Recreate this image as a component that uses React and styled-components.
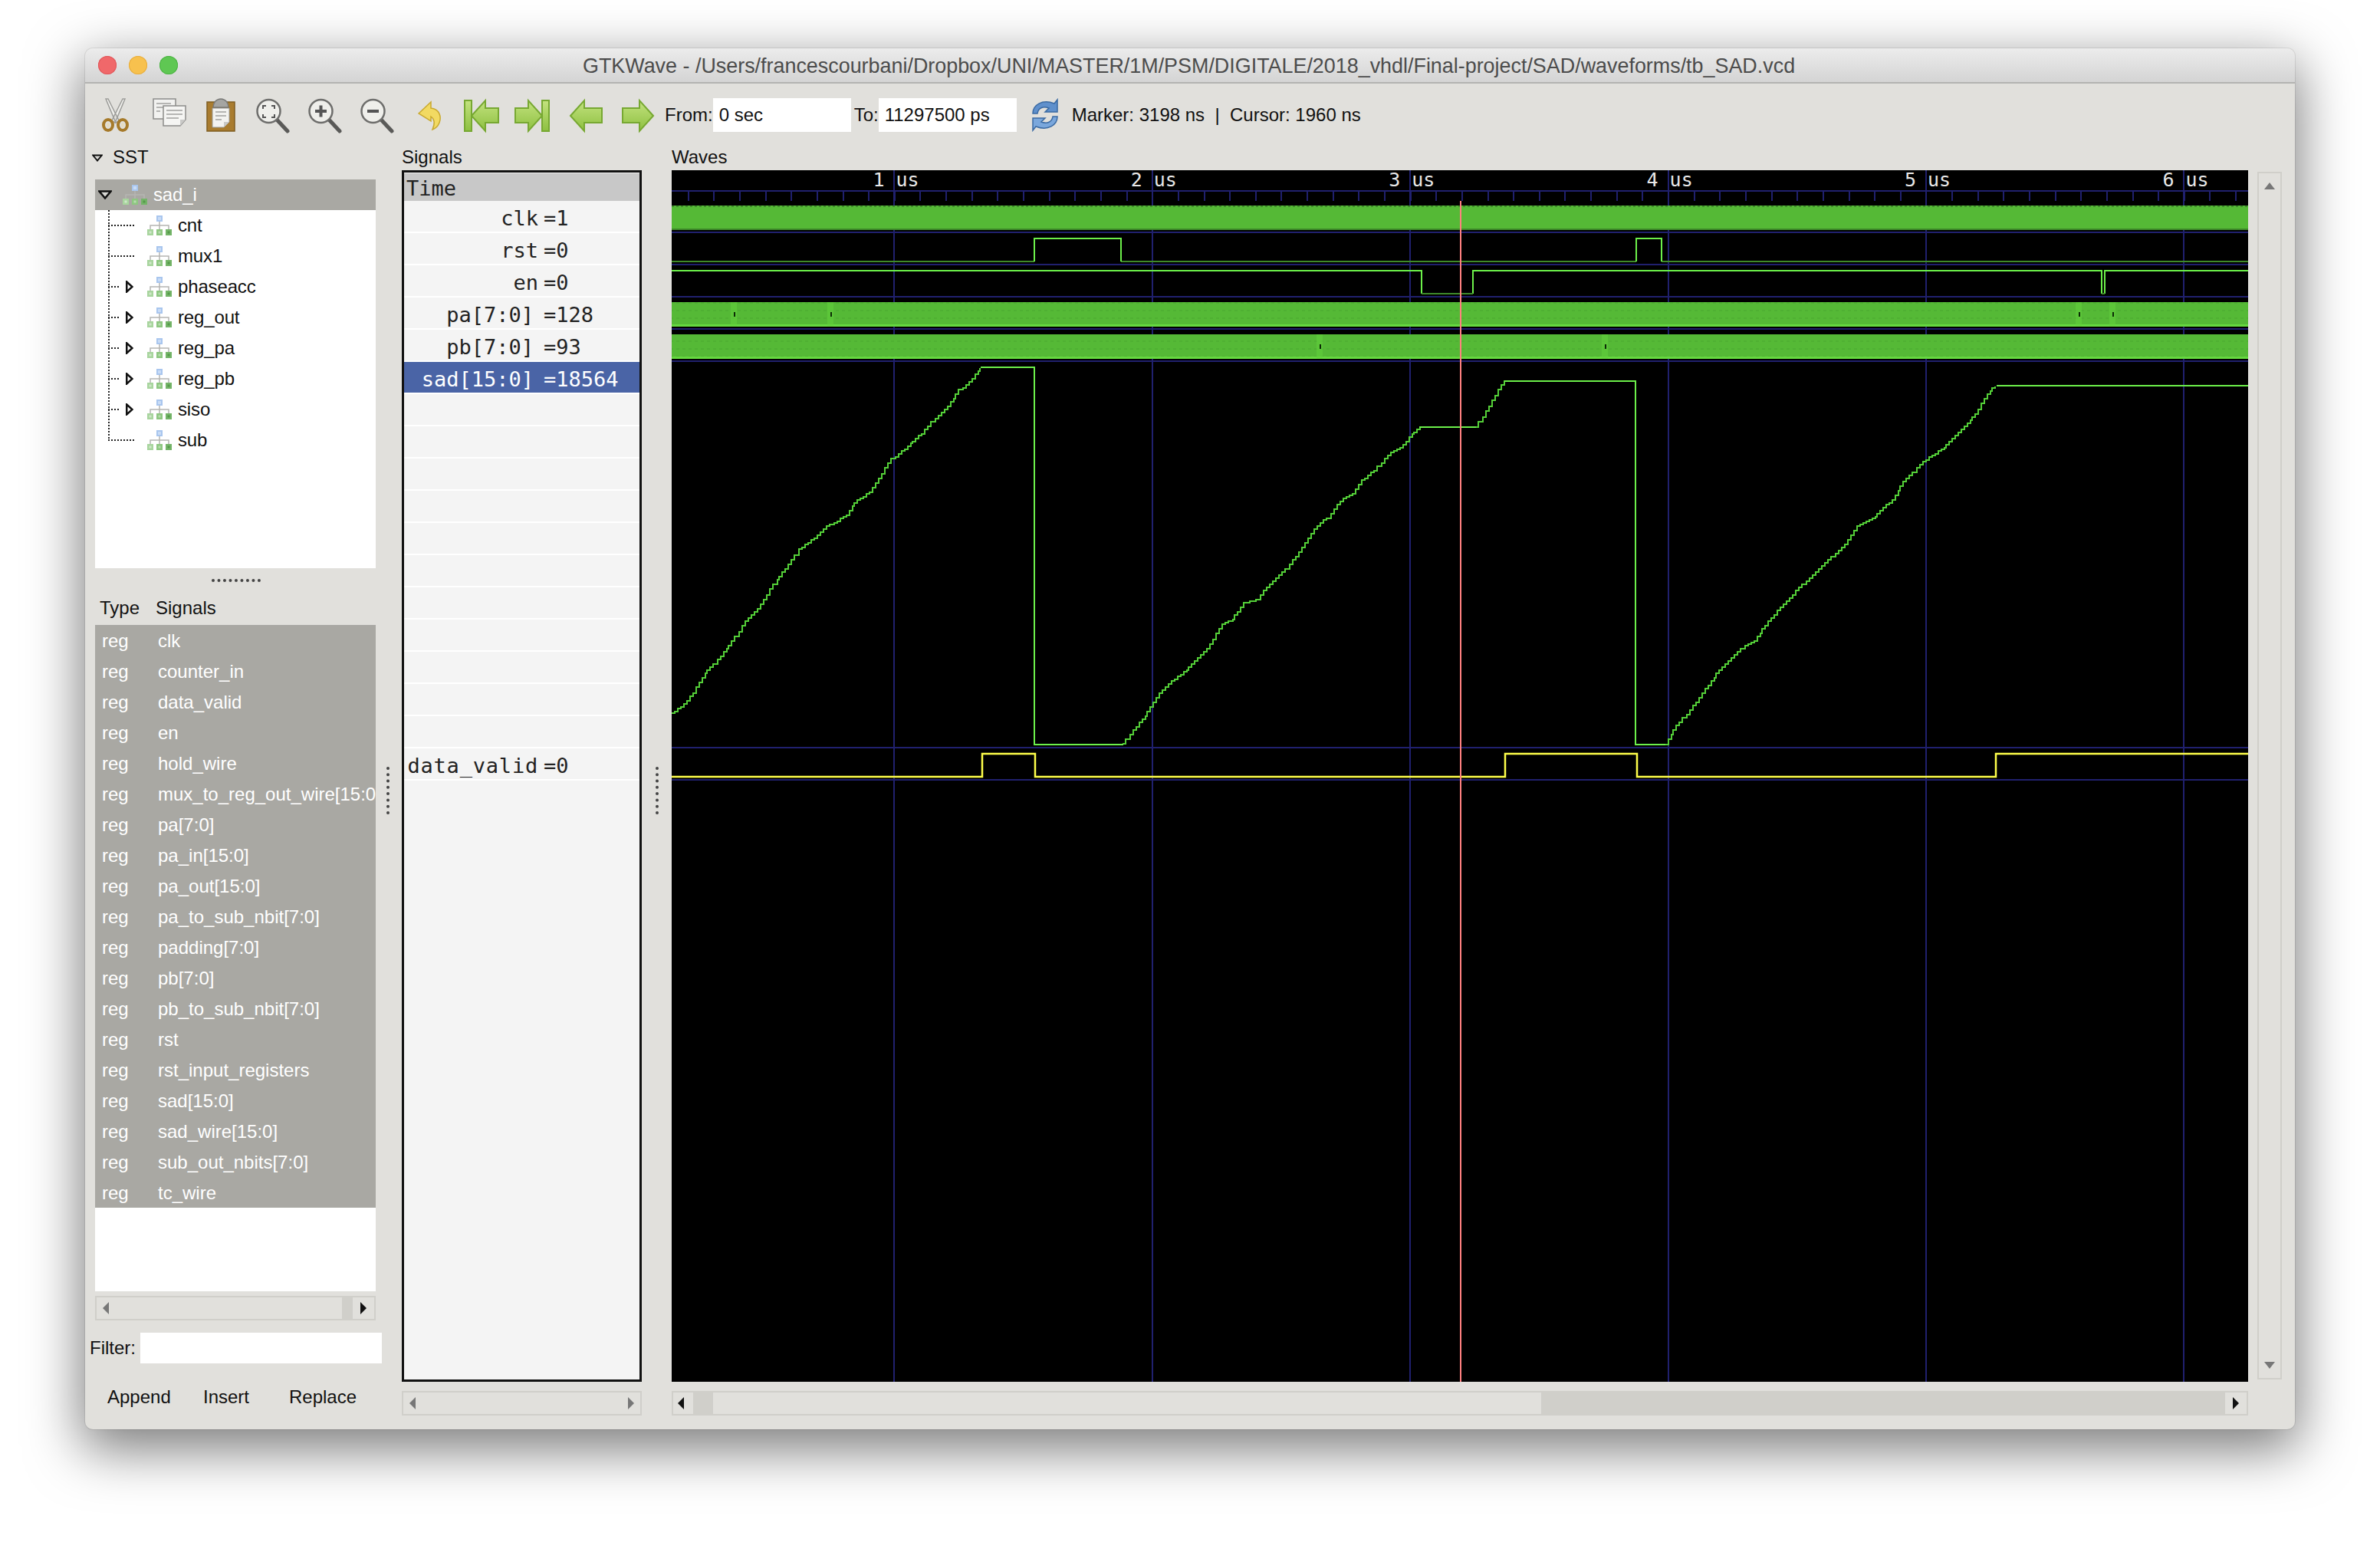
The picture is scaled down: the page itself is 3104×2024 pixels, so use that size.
import React from 'react';
import styled, { createGlobalStyle } from 'styled-components';

const GlobalStyle = createGlobalStyle`
	html, body {
		margin: 0;
		background: #fff;
		overflow: hidden;
	}
	body {
		font-family: "Liberation Sans", Arial, sans-serif;
		font-size: 24px;
		color: #111;
	}
`;

const Page = styled.div`
	width: 3104px;
	height: 2024px;
	padding: 63px 0 0 111px;
	box-sizing: border-box;
`;

const Window = styled.div`
	width: 2882px;
	height: 1801px;
	display: flex;
	flex-direction: column;
	background: #e1e0dc;
	border-radius: 10px;
	box-shadow: 0 22px 70px 4px rgba(0, 0, 0, 0.52), 0 0 0 1px rgba(0, 0, 0, 0.08);
	overflow: hidden;
`;

const TitleBar = styled.div`
	height: 44px;
	flex: none;
	display: flex;
	align-items: center;
	padding-left: 17px;
	background: linear-gradient(#ececec, #d4d4d4);
	border-bottom: 2px solid #b3b3b1;
`;

const Lights = styled.div`
	display: flex;
	gap: 16px;
	flex: none;
`;

const Light = styled.span`
	width: 24px;
	height: 24px;
	border-radius: 50%;
	background: ${(p) => p.$color};
	box-shadow: inset 0 0 0 1px ${(p) => p.$edge};
`;

const Title = styled.div`
	margin-left: 528px;
	padding-top: 2px;
	font-size: 26.9px;
	color: #4c4c4c;
	white-space: nowrap;
`;

const Toolbar = styled.div`
	height: 81px;
	flex: none;
	display: flex;
	align-items: center;
	padding-left: 6px;
`;

const ToolButton = styled.div`
	width: 68px;
	height: 48px;
	flex: none;
	display: flex;
	justify-content: center;
`;

const FieldLabel = styled.span`
	margin-left: ${(p) => p.$left || 0}px;
	white-space: nowrap;
`;

const Field = styled.div`
	width: ${(p) => p.$width}px;
	height: 44px;
	flex: none;
	box-sizing: border-box;
	padding-left: 8px;
	line-height: 44px;
	background: #fff;
`;

const RefreshSlot = styled.div`
	width: 48px;
	height: 48px;
	margin-left: 13px;
	flex: none;
`;

const Status = styled.span`
	margin-left: 11px;
	white-space: pre;
`;

const Panes = styled.div`
	flex: 1;
	display: flex;
	padding-left: 6px;
	min-height: 0;
`;

const LeftPane = styled.div`
	width: 381px;
	flex: none;
	display: flex;
	flex-direction: column;
`;

const PaneLabel = styled.div`
	height: 32px;
	flex: none;
	line-height: 30px;
	white-space: nowrap;
`;

const SstLabel = styled(PaneLabel)`
	height: 44px;
	display: flex;
	padding-left: 3px;
	gap: 13px;
`;

const Tree = styled.div`
	height: 507px;
	flex: none;
	margin: 0 8px 0 7px;
	background: #fff;
`;

const TreeRow = styled.div`
	height: 40px;
	display: flex;
	align-items: center;
	box-sizing: border-box;
	padding-left: ${(p) => (p.$selected ? 4 : 17)}px;
	background: ${(p) => (p.$selected ? '#a9a8a3' : 'transparent')};
	color: ${(p) => (p.$selected ? '#fff' : '#111')};
`;

const Stem = styled.div`
	width: 51px;
	height: 40px;
	flex: none;
	display: flex;
	align-items: center;
	justify-content: flex-end;
	padding-right: 18px;
	box-sizing: border-box;
	background-image: repeating-linear-gradient(to bottom, #222 0 2px, transparent 2px 4px),
		repeating-linear-gradient(to right, #222 0 2px, transparent 2px 4px);
	background-size: 2px ${(p) => (p.$last ? '50%' : '100%')}, ${(p) => (p.$branch ? 14 : 34)}px 2px;
	background-position: 0 0, 0 50%;
	background-repeat: no-repeat;
`;

const OpenSlot = styled.span`
	width: 18px;
	margin-right: 14px;
	display: flex;
	flex: none;
`;

const SstToggle = styled.span`
	width: 14px;
	margin-top: 11px;
	display: flex;
	flex: none;
`;

const NodeName = styled.span`
	margin-left: 8px;
	white-space: nowrap;
	letter-spacing: -0.15px;
`;

const HandleRow = styled.div`
	height: 34px;
	flex: none;
	display: flex;
	justify-content: center;
	padding-top: 14px;
	box-sizing: border-box;
`;

const Handle = styled.div`
	width: 64px;
	height: 4px;
	border-top: 4px dotted #444;
`;

const ListHeader = styled.div`
	height: 40px;
	flex: none;
	display: flex;
	align-items: center;
	box-sizing: border-box;
	padding: 0 0 5px 13px;
`;

const TypeCol = styled.span`
	width: 73px;
	flex: none;
`;

const SignalList = styled.div`
	height: 869px;
	flex: none;
	margin: 0 8px 0 7px;
	background: #fff;
	overflow: hidden;
`;

const SignalItem = styled.div`
	height: 40px;
	display: flex;
	align-items: center;
	box-sizing: border-box;
	padding: 2px 0 0 9px;
	background: #a9a8a3;
	color: #fff;
	white-space: nowrap;
	overflow: hidden;
`;

const Trough = styled.div`
	height: 32px;
	flex: none;
	display: flex;
	box-sizing: border-box;
	border: 2px solid #d0cfca;
	background: #d0cfca;
	margin: ${(p) => p.$margin || 0};
`;

const ScrollPart = styled.div`
	width: ${(p) => (p.$width ? p.$width + 'px' : 'auto')};
	flex: ${(p) => (p.$width ? 'none' : 1)};
	display: flex;
	align-items: center;
	justify-content: ${(p) => p.$justify || 'center'};
	padding: 0 ${(p) => p.$pad || 0}px;
	box-sizing: border-box;
	background: ${(p) => (p.$dark ? '#d0cfca' : '#e1e0dc')};
`;

const ArrowLeft = styled.span`
	width: 0;
	height: 0;
	border-style: solid;
	border-width: 8px 8px 8px 0;
	border-color: transparent ${(p) => p.$color} transparent transparent;
`;

const ArrowRight = styled.span`
	width: 0;
	height: 0;
	border-style: solid;
	border-width: 8px 0 8px 8px;
	border-color: transparent transparent transparent ${(p) => p.$color};
`;

const FilterRow = styled.div`
	height: 40px;
	flex: none;
	display: flex;
	align-items: center;
	margin-top: 16px;
`;

const FilterInput = styled.div`
	width: 316px;
	height: 40px;
	margin-left: 6px;
	background: #fff;
`;

const ActionRow = styled.div`
	height: 60px;
	flex: none;
	display: flex;
	align-items: flex-start;
	padding: 30px 0 0 23px;
`;

const ActionButton = styled.span`
	width: ${(p) => p.$width}px;
	flex: none;
`;

const Splitter = styled.div`
	width: ${(p) => p.$width}px;
	flex: none;
	display: flex;
	justify-content: center;
	padding: 810px ${(p) => p.$shift || 0}px 0 0;
	box-sizing: border-box;
`;

const SplitDots = styled.div`
	width: 0;
	height: 62px;
	border-left: 4px dotted #444;
`;

const SignalPane = styled.div`
	width: 313px;
	flex: none;
	display: flex;
	flex-direction: column;
`;

const SignalBox = styled.div`
	height: 1580px;
	flex: none;
	box-sizing: border-box;
	border: 3px solid #111;
	padding-top: 1px;
	background: #f4f4f4;
	font-family: "DejaVu Sans Mono", "Liberation Mono", monospace;
	font-size: 27px;
	overflow: hidden;
`;

const TimeRow = styled.div`
	height: 36px;
	box-sizing: border-box;
	padding: 2px 0 0 3px;
	line-height: 36px;
	background: #c8c8c8;
	color: #222;
`;

const ValueRow = styled.div`
	height: 42px;
	box-sizing: border-box;
	display: flex;
	border-bottom: 2px solid #fff;
	padding-top: 5px;
	line-height: 36px;
	white-space: nowrap;
	background: ${(p) => (p.$selected ? '#4a64a6' : '#f4f4f4')};
	color: ${(p) => (p.$selected ? '#fff' : '#222')};
`;

const ValueName = styled.span`
	width: 175px;
	flex: none;
	text-align: right;
	padding-right: ${(p) => (p.$bus ? 6 : 0)}px;
	box-sizing: border-box;
	letter-spacing: ${(p) => (p.$wide ? 0.8 : 0)}px;
`;

const ValueText = styled.span`
	margin-left: 7px;
`;

const WavesPane = styled.div`
	width: 2056px;
	flex: none;
	display: flex;
	flex-direction: column;
`;

const WaveCanvas = styled.svg`
	display: block;
	width: 2056px;
	height: 1580px;
	flex: none;
	background: #000;
`;

const VScroll = styled.div`
	width: 32px;
	height: 1575px;
	flex: none;
	margin: 34px 0 0 12px;
	box-sizing: border-box;
	border: 2px solid #d0cfca;
	background: #e1e0dc;
	display: flex;
	flex-direction: column;
	justify-content: space-between;
	align-items: center;
	padding: 12px 0;
`;

const ArrowUp = styled.span`
	width: 0;
	height: 0;
	border-style: solid;
	border-width: 0 7px 9px 7px;
	border-color: transparent transparent #777 transparent;
`;

const ArrowDown = styled.span`
	width: 0;
	height: 0;
	border-style: solid;
	border-width: 9px 7px 0 7px;
	border-color: #777 transparent transparent transparent;
`;

const GRID = '#20206e';
const BAND = '#55b936';
const HIGH = '#6cf04a';
const LOW = '#3f8a2a';

const NODES = [
	{ name: 'cnt' },
	{ name: 'mux1' },
	{ name: 'phaseacc', branch: true },
	{ name: 'reg_out', branch: true },
	{ name: 'reg_pa', branch: true },
	{ name: 'reg_pb', branch: true },
	{ name: 'siso', branch: true },
	{ name: 'sub', last: true },
];

const SIGNALS = [
	'clk', 'counter_in', 'data_valid', 'en', 'hold_wire', 'mux_to_reg_out_wire[15:0]',
	'pa[7:0]', 'pa_in[15:0]', 'pa_out[15:0]', 'pa_to_sub_nbit[7:0]', 'padding[7:0]', 'pb[7:0]',
	'pb_to_sub_nbit[7:0]', 'rst', 'rst_input_registers', 'sad[15:0]', 'sad_wire[15:0]',
	'sub_out_nbits[7:0]', 'tc_wire',
];

const VALUES = [
	{ name: 'clk', value: '=1' },
	{ name: 'rst', value: '=0' },
	{ name: 'en', value: '=0' },
	{ name: 'pa[7:0]', value: '=128', bus: true },
	{ name: 'pb[7:0]', value: '=93', bus: true },
	{ name: 'sad[15:0]', value: '=18564', bus: true, selected: true },
	...Array.from({ length: 11 }, () => ({ name: '', value: '' })),
	{ name: 'data_valid', value: '=0', wide: true },
];

// key points of the sad[15:0] ramps, read off the trace
const RAMP_A = [[0,1380],[15,1345],[25,1300],[35,1240],[45,1200],[60,1140],[70,1100],[85,1020],[100,970],[110,915],[122,860],[135,800],[147,740],[165,695],[180,650],[203,605],[212,555],[230,515],[240,460],[255,385],[270,345],[290,285],[305,225],[320,180],[333,115],[345,85],[358,27]];
const RAMP_B = [[523,1500],[535,1445],[552,1375],[565,1300],[580,1255],[600,1200],[620,1130],[638,1030],[650,1015],[663,950],[680,935],[690,885],[712,815],[728,750],[748,645],[760,615],[775,550],[790,520],[800,470],[815,430],[830,370],[845,340],[858,290],[868,261]];
const RAMP_C = [[932,261],[940,220],[955,135],[965,80]];
const RAMP_D = [[1152,1502],[1165,1430],[1180,1370],[1195,1300],[1215,1210],[1240,1125],[1255,1095],[1265,1050],[1285,965],[1300,915],[1330,815],[1345,770],[1360,720],[1375,650],[1395,610],[1415,545],[1425,490],[1450,395],[1475,340],[1495,270],[1512,210],[1525,130],[1535,99]];

const toX = (v) => 876 + v / 0.889;
const toY = (v) => 470 + v / 3;

function stairs(points) {
	let d = `M${toX(points[0][0]).toFixed(0)} ${toY(points[0][1]).toFixed(0)}`;
	for (let i = 1; i < points.length; i++) {
		const x0 = toX(points[i - 1][0]);
		const y0 = toY(points[i - 1][1]);
		const x1 = toX(points[i][0]);
		const y1 = toY(points[i][1]);
		const steps = Math.max(1, Math.round((x1 - x0) / 4));
		for (let s = 1; s <= steps; s++) {
			const x = Math.round((x0 + ((x1 - x0) * s) / steps) / 2) * 2;
			const y = Math.round((y0 + ((y1 - y0) * s) / steps) / 2) * 2;
			d += `H${x}V${y}`;
		}
	}
	return d;
}

function TriangleDown({ width, height }) {
	return (
		<svg width={width} height={height} viewBox="0 0 18 12">
			<path d="M1.500 1.500H16.500L9 10.500Z" fill="#d8d8d4" stroke="#111" strokeWidth="2.500" />
		</svg>
	);
}

function TriangleRight() {
	return (
		<svg width="10" height="16" viewBox="0 0 10 16">
			<path d="M1.250 1.500L8.500 8L1.250 14.500Z" fill="#fff" stroke="#111" strokeWidth="2.500" />
		</svg>
	);
}

function NodeIcon() {
	return (
		<svg width="32" height="26" viewBox="0 0 32 26" style={{ flex: 'none' }}>
			<rect x="12" y="0" width="8" height="8" fill="#a9c6ee" />
			<rect x="14" y="2" width="4" height="4" fill="#c9dcf6" />
			<path d="M16 8V13M4 18V13H28V18M16 13V18" stroke="#b5b5b2" strokeWidth="1.5" fill="none" />
			<rect x="0" y="18" width="8" height="8" fill="#a8d59e" />
			<rect x="12" y="18" width="8" height="8" fill="#8ec781" />
			<rect x="24" y="18" width="8" height="8" fill="#74b468" />
			<rect x="2.5" y="20.5" width="3" height="3" fill="#cfe8c9" />
			<rect x="14.5" y="20.5" width="3" height="3" fill="#b6dcae" />
			<rect x="26.5" y="20.5" width="3" height="3" fill="#559a4a" />
		</svg>
	);
}

function IconBox({ children }) {
	return (
		<ToolButton>
			<svg width="48" height="48" viewBox="0 0 48 48">
				{children}
			</svg>
		</ToolButton>
	);
}

function CutIcon() {
	return (
		<IconBox>
			<path d="M11 3L14 3L28 31L24 34ZM36 3L33 3L19 31L23 34Z" fill="#efefec" stroke="#9d9d9a" strokeWidth="1.5" />
			<ellipse cx="14" cy="37" rx="6" ry="7" fill="none" stroke="#a67a2a" strokeWidth="4" />
			<ellipse cx="33" cy="37" rx="6" ry="7" fill="none" stroke="#a67a2a" strokeWidth="4" />
			<ellipse cx="14" cy="37" rx="2" ry="3" fill="#e6dcc0" />
			<ellipse cx="33" cy="37" rx="2" ry="3" fill="#e6dcc0" />
		</IconBox>
	);
}

function CopyIcon() {
	return (
		<IconBox>
			<rect x="5" y="3" width="29" height="26" fill="#f2f2f0" stroke="#8c8c8a" strokeWidth="1.5" />
			<path d="M9 9H28M9 14H26M9 19H14" stroke="#b5b5b3" strokeWidth="2" />
			<path d="M18 12H47V30L40 38H18Z" fill="#f5f5f3" stroke="#8c8c8a" strokeWidth="1.5" />
			<path d="M22 18H43M22 23H43M22 28H38" stroke="#b5b5b3" strokeWidth="2" />
			<path d="M47 30H40V38Z" fill="#c9c9c7" />
		</IconBox>
	);
}

function PasteIcon() {
	return (
		<IconBox>
			<rect x="7" y="7" width="36" height="38" fill="#a97c2f" stroke="#7f5d22" strokeWidth="1.5" />
			<path d="M14 15H36V33L29 40H14Z" fill="#f3f3f1" stroke="#9a9a98" strokeWidth="1" />
			<path d="M18 20H32M18 25H32M18 30H26" stroke="#b5b5b3" strokeWidth="2" />
			<path d="M36 33H29V40Z" fill="#c9c9c7" />
			<path d="M15 14C15 8 19 3 25 3C31 3 35 8 35 14Z" fill="#a5a5a2" stroke="#7a7a78" strokeWidth="1.5" />
		</IconBox>
	);
}

function Lens({ children }) {
	return (
		<IconBox>
			<path d="M30 30L44 45" stroke="#5a5a58" strokeWidth="5" strokeLinecap="round" />
			<circle cx="19.5" cy="19" r="15" fill="#efefeb" stroke="#6e6e6c" strokeWidth="2.5" />
			{children}
		</IconBox>
	);
}

function UndoIcon() {
	return (
		<IconBox>
			<path d="M11 22L27 7V15C38 16 41 26 38 34C36 39 32 42 29 43C32 36 33 30 27 26V32Z" fill="#f2da62" stroke="#c9a92f" strokeWidth="1.5" />
		</IconBox>
	);
}

function GreenArrow({ id, flip, bar, head, tail }) {
	return (
		<IconBox>
			<defs>
				<linearGradient id={id} x1="0" y1="0" x2="0" y2="1">
					<stop offset="0" stopColor="#c3e27f" />
					<stop offset="1" stopColor="#8dc040" />
				</linearGradient>
			</defs>
			<g transform={flip ? 'translate(48 0) scale(-1 1)' : undefined} stroke="#77a832" strokeWidth="2" fill={`url(#${id})`}>
				{bar && <rect x="3" y="5" width="9" height="40" />}
				<path d={`M${head} 25L${head + 18} 5V15H${tail}V34H${head + 18}V45Z`} />
			</g>
		</IconBox>
	);
}

function RefreshIcon() {
	return (
		<svg width="48" height="48" viewBox="0 0 48 48">
			<path d="M8 22C8 11 20 3 36 9L40 4V20H24L29 15C21 12 15 15 14 22Z" fill="#5f90cc" stroke="#3a6aa3" strokeWidth="1.5" />
			<path d="M40 26C40 37 28 45 12 39L8 44V28H24L19 33C27 36 33 33 34 26Z" fill="#7aa7dc" stroke="#3a6aa3" strokeWidth="1.5" />
		</svg>
	);
}

function Scale() {
	const majors = [1, 2, 3, 4, 5, 6];
	const ticks = [];
	for (let x = 896.7; x < 2932; x += 33.64) ticks.push(Math.round(x));
	return (
		<g>
			{majors.map((n) => {
				const x = 1165.4 + (n - 1) * 336.4;
				return (
					<g key={n}>
						<rect x={Math.round(x)} y="222" width="2" height="1580" fill={GRID} />
						<text x={x - 27} y="243" fill="#e8e8e8" fontFamily="DejaVu Sans Mono, monospace" fontSize="25">{n}</text>
						<text x={x + 3} y="243" fill="#e8e8e8" fontFamily="DejaVu Sans Mono, monospace" fontSize="25">us</text>
					</g>
				);
			})}
			{ticks.map((x) => (
				<rect key={x} x={x} y="250" width="2" height="12" fill={GRID} />
			))}
			<rect x="876" y="248" width="2056" height="2" fill={GRID} />
			{[302, 344, 386, 428, 470, 974, 1016].map((y) => (
				<rect key={y} x="876" y={y} width="2056" height="2" fill={GRID} />
			))}
		</g>
	);
}

function Band({ y, marks }) {
	return (
		<g>
			<rect x="876" y={y} width="2056" height="32" fill="url(#busDots)" />
			<rect x="876" y={y + 29} width="2056" height="3" fill="#66d93f" />
			{marks.map((x) => (
				<g key={x}>
					<rect x={x - 4} y={y} width="8" height="32" fill="#62d23c" opacity="0.55" />
					<rect x={x} y={y + 13} width="2" height="6" fill="#0b2a05" />
				</g>
			))}
		</g>
	);
}

function Waves() {
	return (
		<WaveCanvas viewBox="876 222 2056 1580">
			<defs>
				<pattern id="busDots" width="8" height="10" patternUnits="userSpaceOnUse">
					<rect width="8" height="10" fill={BAND} />
					<rect x="2" y="4" width="4" height="2" fill="#4fb033" />
				</pattern>
				<pattern id="clkEdge" width="6" height="2" patternUnits="userSpaceOnUse">
					<rect width="3" height="2" fill="#3f8a2a" />
					<rect x="3" width="3" height="2" fill={BAND} />
				</pattern>
			</defs>
			<Scale />

			{/* clk */}
			<rect x="876" y="268" width="2056" height="32" fill={BAND} />
			<rect x="876" y="268" width="2056" height="2" fill="url(#clkEdge)" />
			<rect x="876" y="298" width="2056" height="2" fill={LOW} />

			{/* rst */}
			<path d="M876 341H1349M1462 341H2134M2167 341H2932" stroke={LOW} strokeWidth="2" fill="none" />
			<path d="M1349 341V311H1462V341M2134 341V311H2167V341" stroke={HIGH} strokeWidth="2" fill="none" />

			{/* en */}
			<path d="M876 353H1854V383M1921 383V353H2741V383M2745 383V353H2932" stroke={HIGH} strokeWidth="2" fill="none" />
			<path d="M1854 383H1921M2741 383H2745" stroke={LOW} strokeWidth="2" fill="none" />

			<Band y={394} marks={[957, 1083, 2711, 2755]} />
			<Band y={436} marks={[1721, 2093]} />

			{/* sad[15:0] */}
			<path d={stairs(RAMP_A)} stroke="#54cf38" strokeWidth="2" fill="none" />
			<path d={stairs(RAMP_B)} stroke="#54cf38" strokeWidth="2" fill="none" />
			<path d={stairs(RAMP_C)} stroke="#54cf38" strokeWidth="2" fill="none" />
			<path d={stairs(RAMP_D)} stroke="#54cf38" strokeWidth="2" fill="none" />
			<path d="M1279 479H1349V971H1465M1925 557H1851M1962 497H2133V971H2172M2604 503H2932" stroke={HIGH} strokeWidth="2" fill="none" />

			{/* data_valid */}
			<path d="M876 1013H1281V983H1350V1013H1963V983H2135V1013H2603V983H2932" stroke="#ffff4a" strokeWidth="2.5" fill="none" />

			{/* marker */}
			<rect x="1904" y="262" width="2" height="1540" fill="#ff8080" />
		</WaveCanvas>
	);
}

export default function App() {
	return (
		<Page>
			<GlobalStyle />
			<Window>
				<TitleBar>
					<Lights>
						<Light $color="#f0686a" $edge="#e0565a" />
						<Light $color="#f7c14e" $edge="#e8ad3c" />
						<Light $color="#5fc753" $edge="#4cb344" />
					</Lights>
					<Title>GTKWave - /Users/francescourbani/Dropbox/UNI/MASTER/1M/PSM/DIGITALE/2018_vhdl/Final-project/SAD/waveforms/tb_SAD.vcd</Title>
				</TitleBar>
				<Toolbar>
					<CutIcon />
					<CopyIcon />
					<PasteIcon />
					<Lens>
						<path d="M12 16V12H16M23 12H27V16M27 23V27H23M16 27H12V23" stroke="#555" strokeWidth="2" fill="none" />
					</Lens>
					<Lens>
						<path d="M12 19H27M19.5 11.500V26.500" stroke="#555" strokeWidth="4" />
					</Lens>
					<Lens>
						<path d="M12 19H27" stroke="#555" strokeWidth="4" />
					</Lens>
					<UndoIcon />
					<GreenArrow id="gFirst" bar head={12} tail={47} />
					<GreenArrow id="gLast" bar flip head={12} tail={47} />
					<GreenArrow id="gLeft" head={5} tail={46} />
					<GreenArrow id="gRight" flip head={3} tail={43} />
					<FieldLabel $left={2}>From:</FieldLabel>
					<Field $width={180}>0 sec</Field>
					<FieldLabel $left={4}>To:</FieldLabel>
					<Field $width={180}>11297500 ps</Field>
					<RefreshSlot>
						<RefreshIcon />
					</RefreshSlot>
					<Status>Marker: 3198 ns  |  Cursor: 1960 ns</Status>
				</Toolbar>
				<Panes>
					<LeftPane>
						<SstLabel>
							<SstToggle>
								<TriangleDown width={14} height={10} />
							</SstToggle>
							SST
						</SstLabel>
						<Tree>
							<TreeRow $selected>
								<OpenSlot>
									<TriangleDown width={18} height={12} />
								</OpenSlot>
								<NodeIcon />
								<NodeName>sad_i</NodeName>
							</TreeRow>
							{NODES.map((node) => (
								<TreeRow key={node.name}>
									<Stem $branch={node.branch} $last={node.last}>
										{node.branch && <TriangleRight />}
									</Stem>
									<NodeIcon />
									<NodeName>{node.name}</NodeName>
								</TreeRow>
							))}
						</Tree>
						<HandleRow>
							<Handle />
						</HandleRow>
						<ListHeader>
							<TypeCol>Type</TypeCol>
							<span>Signals</span>
						</ListHeader>
						<SignalList>
							{SIGNALS.map((name) => (
								<SignalItem key={name}>
									<TypeCol>reg</TypeCol>
									{name}
								</SignalItem>
							))}
						</SignalList>
						<Trough $margin="6px 8px 0 7px">
							<ScrollPart $width={320} $justify="flex-start" $pad={8}>
								<ArrowLeft $color="#777" />
							</ScrollPart>
							<ScrollPart $dark />
							<ScrollPart $width={28}>
								<ArrowRight $color="#111" />
							</ScrollPart>
						</Trough>
						<FilterRow>
							<span>Filter:</span>
							<FilterInput />
						</FilterRow>
						<ActionRow>
							<ActionButton $width={125}>Append</ActionButton>
							<ActionButton $width={112}>Insert</ActionButton>
							<ActionButton $width={90}>Replace</ActionButton>
						</ActionRow>
					</LeftPane>
					<Splitter $width={26} $shift={10}>
						<SplitDots />
					</Splitter>
					<SignalPane>
						<PaneLabel>Signals</PaneLabel>
						<SignalBox>
							<TimeRow>Time</TimeRow>
							{VALUES.map((row, i) => (
								<ValueRow key={i} $selected={row.selected}>
									<ValueName $bus={row.bus} $wide={row.wide}>{row.name}</ValueName>
									<ValueText>{row.value}</ValueText>
								</ValueRow>
							))}
						</SignalBox>
						<Trough $margin="12px 0 0">
							<ScrollPart $justify="space-between" $pad={8}>
								<ArrowLeft $color="#777" />
								<ArrowRight $color="#777" />
							</ScrollPart>
						</Trough>
					</SignalPane>
					<Splitter $width={39}>
						<SplitDots />
					</Splitter>
					<WavesPane>
						<PaneLabel>Waves</PaneLabel>
						<Waves />
						<Trough $margin="12px 0 0">
							<ScrollPart $width={26} $justify="flex-start" $pad={6}>
								<ArrowLeft $color="#111" />
							</ScrollPart>
							<ScrollPart $width={26} $dark />
							<ScrollPart $width={1080} />
							<ScrollPart $dark />
							<ScrollPart $width={28}>
								<ArrowRight $color="#111" />
							</ScrollPart>
						</Trough>
					</WavesPane>
					<VScroll>
						<ArrowUp />
						<ArrowDown />
					</VScroll>
				</Panes>
			</Window>
		</Page>
	);
}
